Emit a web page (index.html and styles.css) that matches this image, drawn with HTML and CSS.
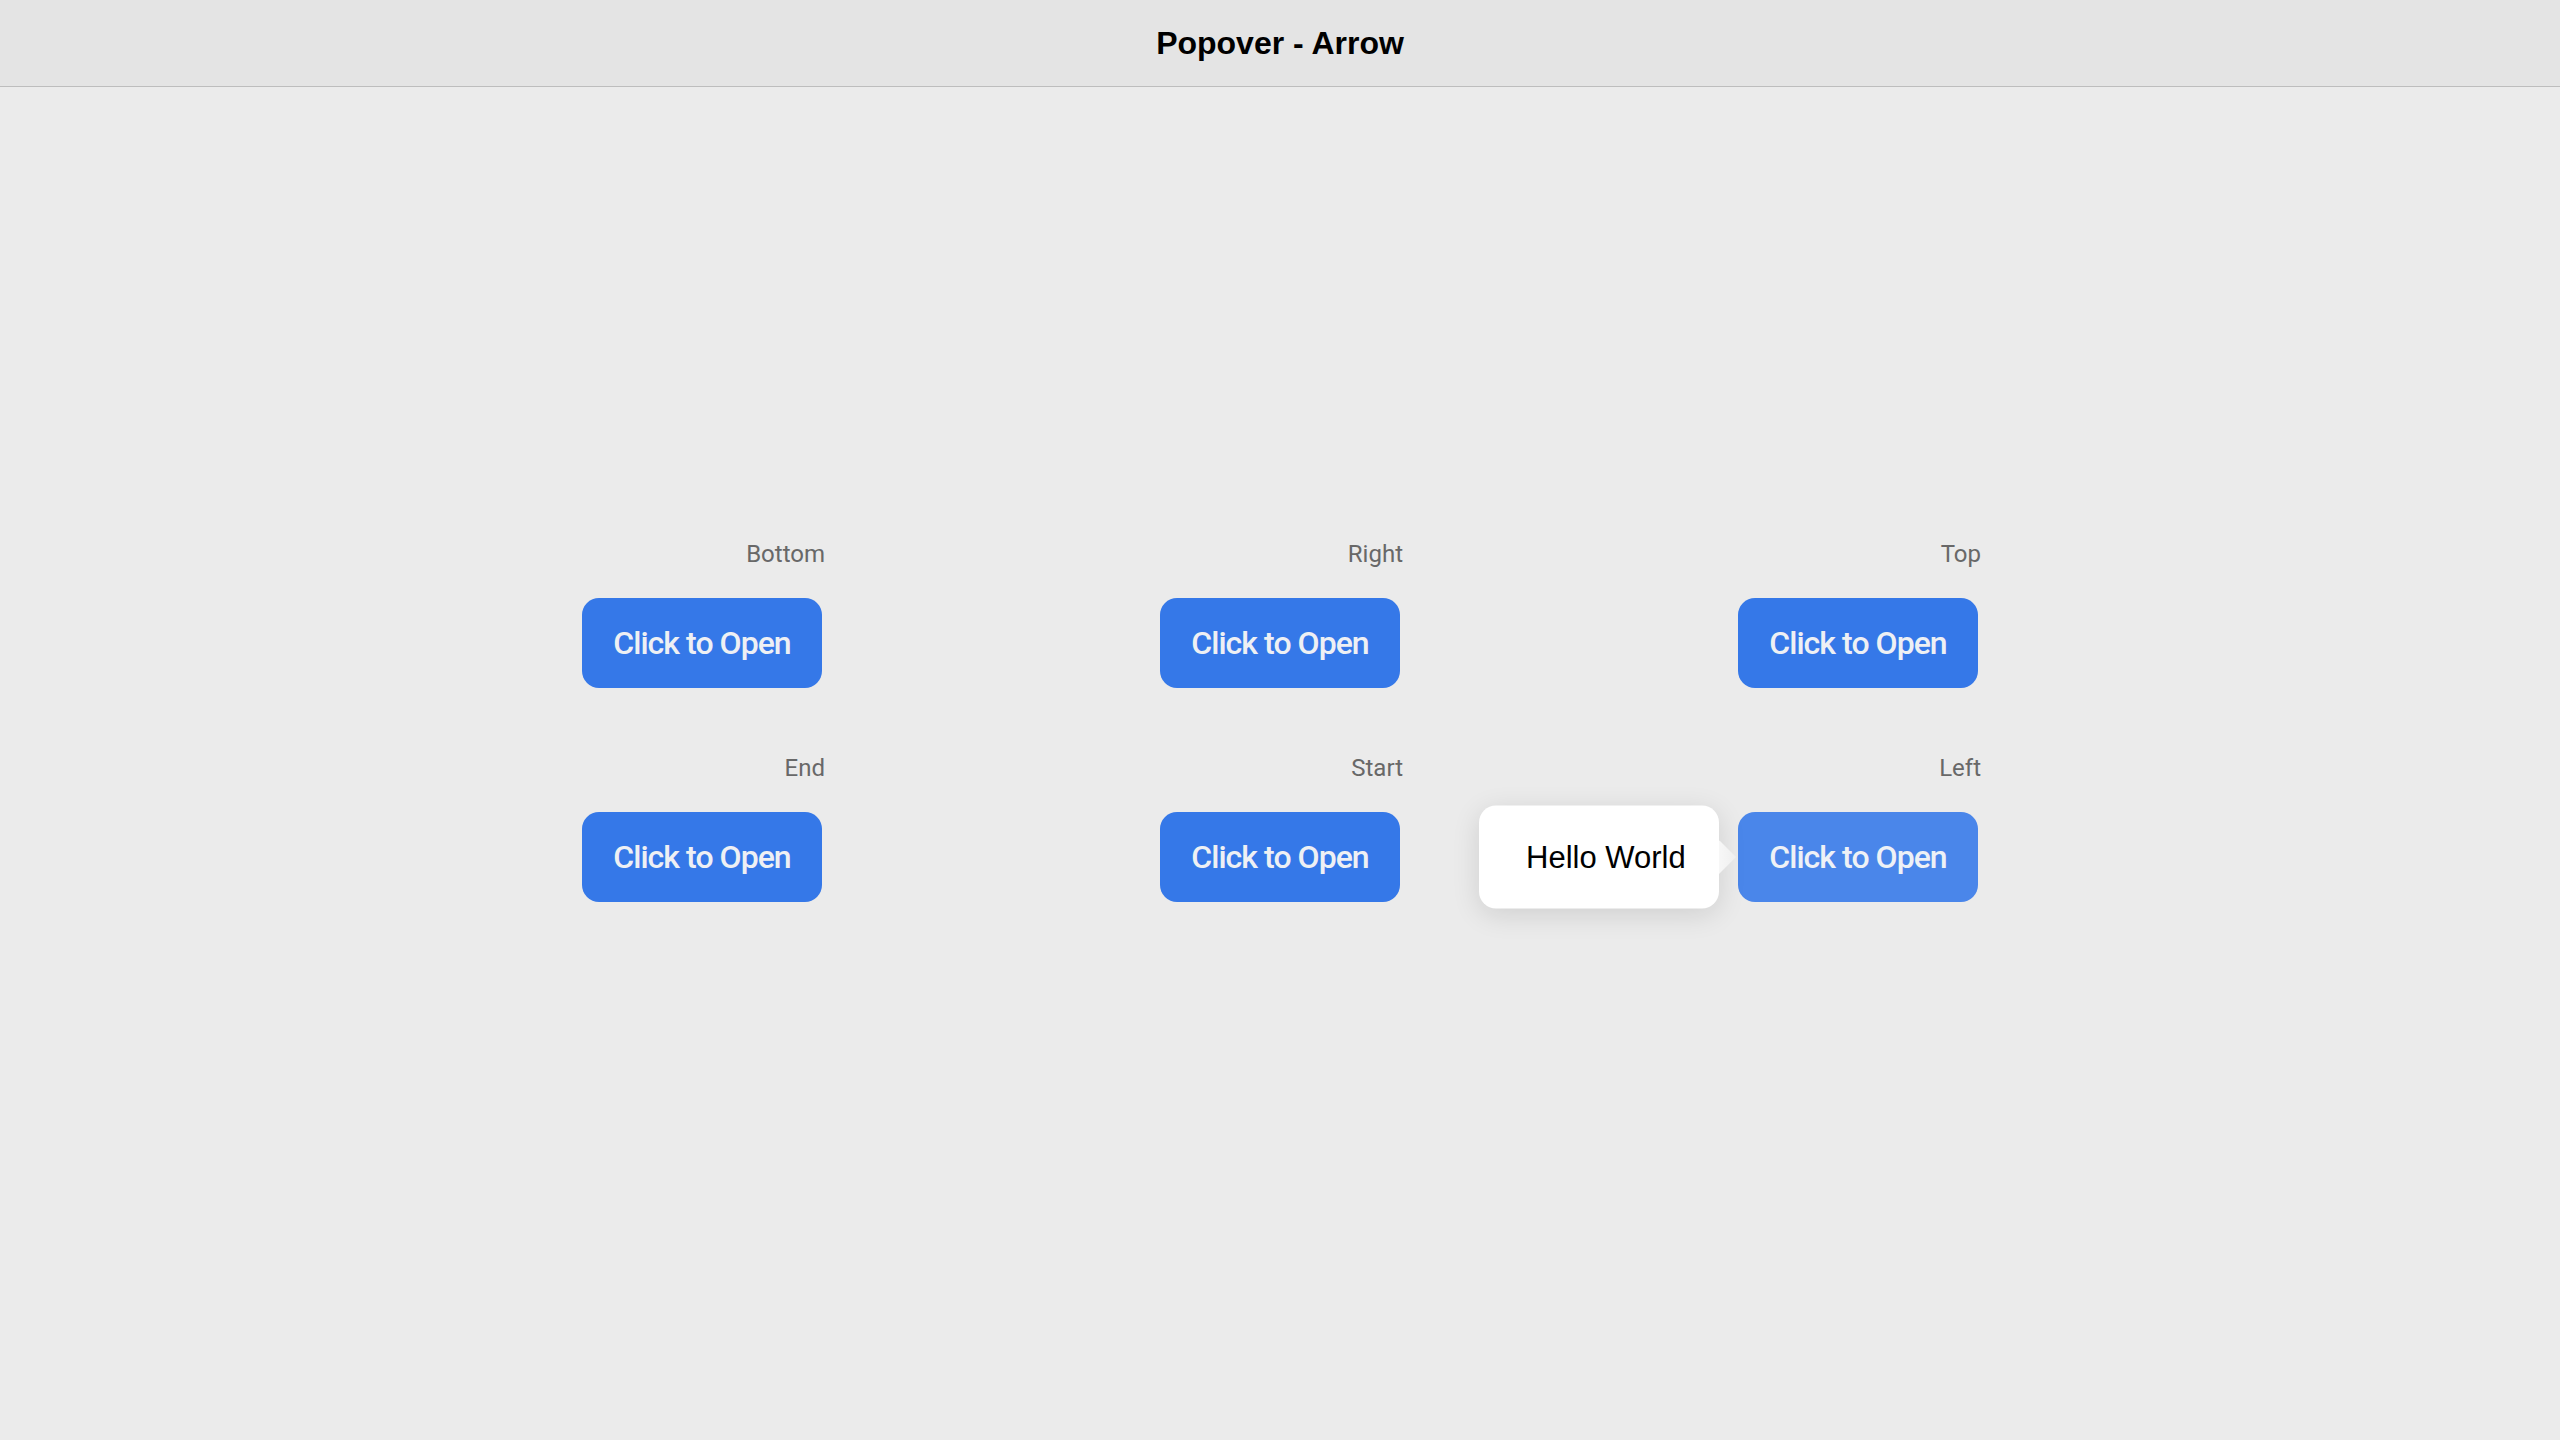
FILE: index.html
```html
<!DOCTYPE html>
<html lang="en">
<head>
<meta charset="utf-8">
<title>Popover - Arrow</title>
<link rel="stylesheet" href="styles.css">
</head>
<body>
<header class="toolbar">
  <h1 class="title">Popover - Arrow</h1>
</header>
<main class="content">
  <div class="grid">
    <div class="cell">
      <div class="label">Bottom</div>
      <div class="btn-wrap"><button class="btn">Click to Open</button></div>
    </div>
    <div class="cell">
      <div class="label">Right</div>
      <div class="btn-wrap"><button class="btn">Click to Open</button></div>
    </div>
    <div class="cell">
      <div class="label">Top</div>
      <div class="btn-wrap"><button class="btn">Click to Open</button></div>
    </div>
    <div class="cell">
      <div class="label">End</div>
      <div class="btn-wrap"><button class="btn">Click to Open</button></div>
    </div>
    <div class="cell">
      <div class="label">Start</div>
      <div class="btn-wrap"><button class="btn">Click to Open</button></div>
    </div>
    <div class="cell">
      <div class="label">Left</div>
      <div class="btn-wrap">
        <button class="btn btn-active">Click to Open</button>
        <div class="popover">
          <div class="popover-content">Hello World</div>
          <div class="popover-arrow"></div>
        </div>
      </div>
    </div>
  </div>
</main>
</body>
</html>
```
FILE: styles.css
```css
html, body {
  margin: 0;
  padding: 0;
}
body {
  width: 2560px;
  height: 1440px;
  background: #ebebeb;
  font-family: Roboto, "Liberation Sans", sans-serif;
  overflow: hidden;
}
.toolbar {
  height: 86px;
  background: #e4e4e4;
  border-bottom: 1px solid #bdbdbd;
  display: flex;
  align-items: center;
  justify-content: center;
}
.title {
  margin: 0;
  font-family: "Liberation Sans", Arial, sans-serif;
  font-weight: 700;
  font-size: 32px;
  line-height: 86px;
  color: #000;
}
.content {
  padding-top: 453px;
  display: flex;
  justify-content: center;
}
.grid {
  display: grid;
  grid-template-columns: repeat(3, 244px);
  column-gap: 334px;
  row-gap: 66px;
}
.cell {
  display: flex;
  flex-direction: column;
}
.label {
  font-size: 24px;
  line-height: 28px;
  color: #686868;
  text-align: right;
  margin-right: -1px;
}
.btn-wrap {
  position: relative;
  margin-top: 30px;
  margin-left: 2px;
  align-self: flex-start;
}
.btn {
  display: block;
  width: 240px;
  height: 90px;
  border: none;
  border-radius: 17px;
  background: #3578e8;
  color: #eef0f4;
  font-family: Roboto, sans-serif;
  font-weight: 500;
  font-size: 32px;
  letter-spacing: -0.03em;
  padding: 0;
}
.btn-active {
  background: #4a86ea;
  color: #eef1f6;
}
.popover {
  position: absolute;
  right: calc(100% + 19px);
  top: 50%;
  transform: translateY(-50%);
  width: 240px;
  height: 103px;
  background: #ffffff;
  border-radius: 17px;
  box-shadow: 0 6px 28px rgba(0, 0, 0, 0.12);
  display: flex;
  align-items: center;
}
.popover-content {
  padding-left: 47px;
  font-family: "Liberation Sans", Arial, sans-serif;
  font-size: 31px;
  color: #000;
}
.popover-arrow {
  position: absolute;
  left: 100%;
  top: 50%;
  transform: translateY(-50%);
  width: 17px;
  height: 34px;
  background: linear-gradient(90deg, #f7f7f7, #efefef);
  clip-path: polygon(0 0, 100% 50%, 0 100%);
}
```
